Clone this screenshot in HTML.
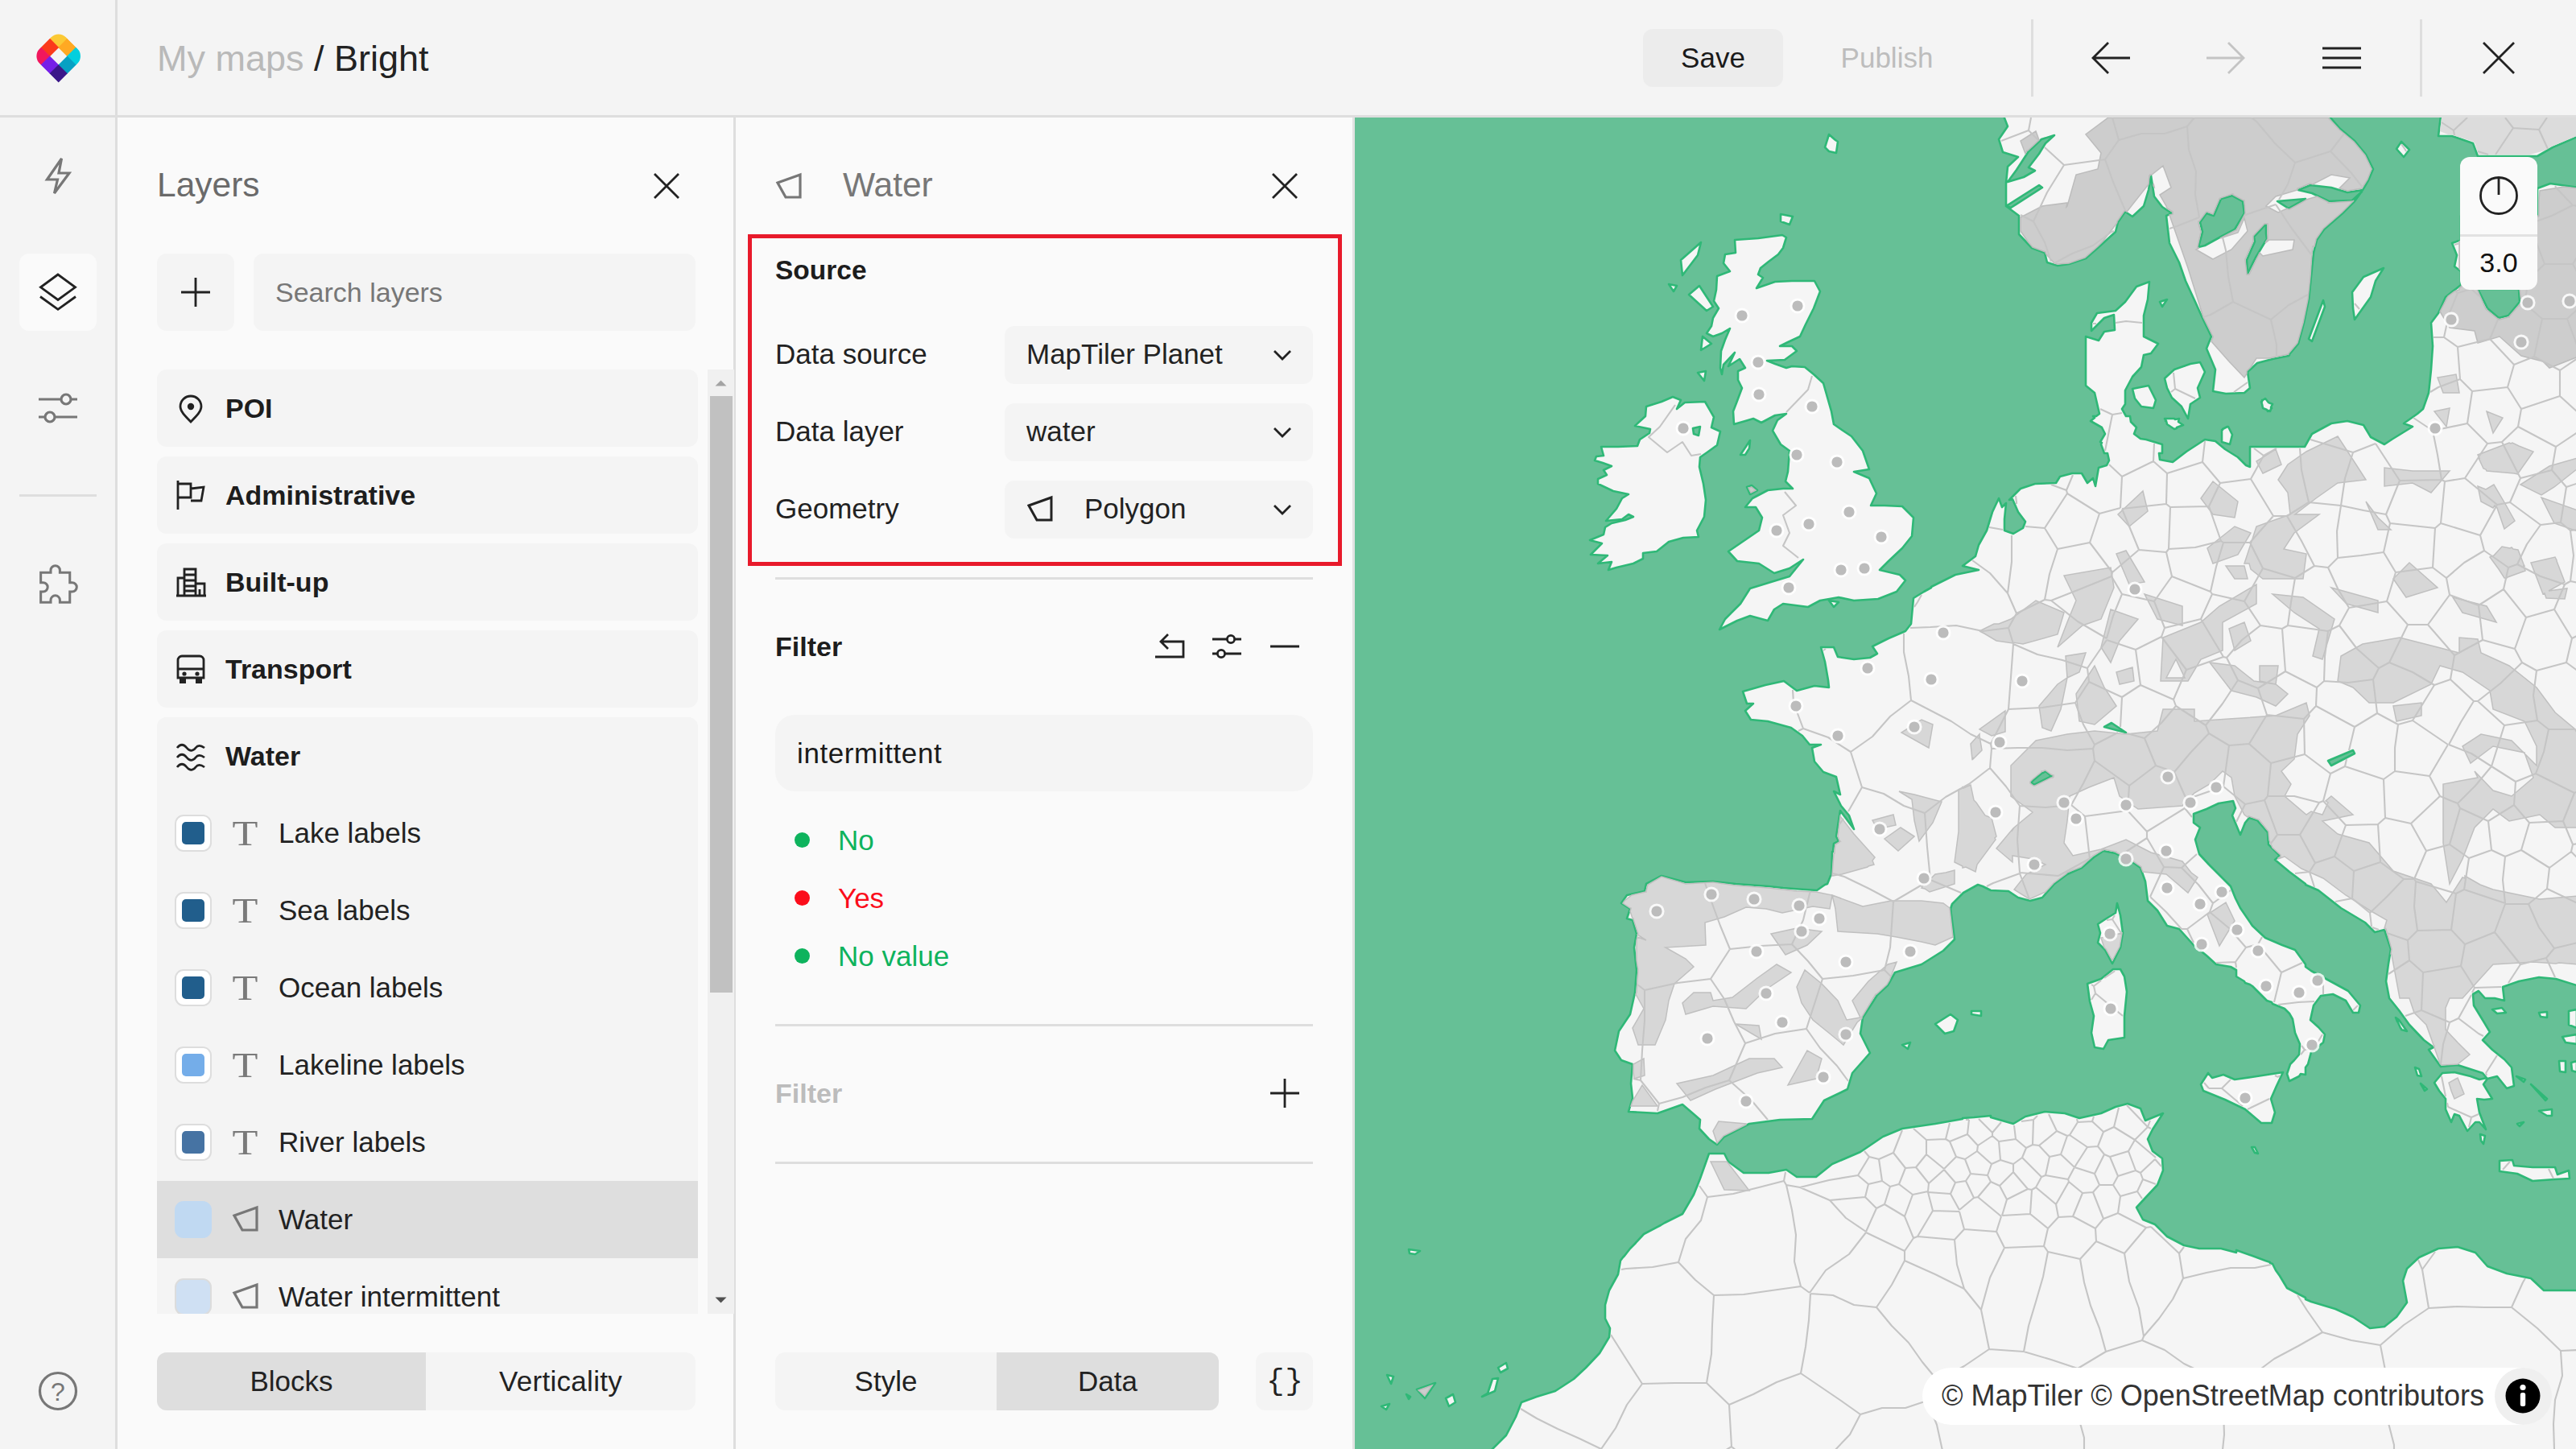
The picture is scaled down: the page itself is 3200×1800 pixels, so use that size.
<!DOCTYPE html>
<html lang="en">
<head>
<meta charset="utf-8">
<title>Bright - Map editor</title>
<style>
*{box-sizing:border-box;margin:0;padding:0}
html,body{width:3200px;height:1800px;overflow:hidden;background:#fafafa}
body{font-family:"Liberation Sans",sans-serif;font-size:35px;color:#222;position:relative}
.abs{position:absolute}
svg{display:block;position:absolute;overflow:visible}
.ico{fill:none;stroke:#222;stroke-width:2.8;stroke-linecap:butt;stroke-linejoin:miter}
.gico{fill:none;stroke:#777;stroke-width:3.2}
#header{left:0;top:0;width:3200px;height:146px;background:#f4f4f4;border-bottom:3px solid #dedede}
#side{left:0;top:0;width:146px;height:1800px;background:#f4f4f4;border-right:3px solid #dedede}
#layers{left:146px;top:146px;width:768px;height:1654px;background:#fafafa;border-right:3px solid #dedede}
#props{left:914px;top:146px;width:769px;height:1654px;background:#fafafa;border-right:3px solid #e2e2e2}
#map{left:1682px;top:146px;width:1518px;height:1654px;background:#66c096;overflow:hidden}
.t{position:absolute;white-space:nowrap;line-height:1}
.box{position:absolute;background:#f4f4f4;border-radius:12px}
.grp{position:absolute;left:195px;width:672px;height:96px;background:#f4f4f4;border-radius:12px}
.grp .t{left:85px;top:31px;font-weight:bold;font-size:34px;color:#1d1d1d}
.row{position:absolute;left:195px;width:672px;height:96px}
.row .t{left:151px;top:30px;font-size:35px}
.sw{position:absolute;left:22px;top:25px;width:46px;height:46px;border-radius:11px;background:#fff;border:2px solid #ddd}
.sw i{position:absolute;left:7px;top:7px;width:28px;height:28px;border-radius:5px}
.hr{position:absolute;left:963px;width:668px;height:3px;background:#dedede}
.lbl{left:963px;font-size:35px}
.sel{left:1248px;width:383px;height:72px}
.dot{position:absolute;width:19px;height:19px;border-radius:50%}
</style>
</head>
<body>
<!-- MAP -->
<div id="map" class="abs">
<svg id="mapsvg" width="1518" height="1654" viewBox="1682 146 1518 1654" style="left:0;top:0">
<!--MAPCONTENT-->
<path d="M2281,190 2283,176 2280,174 2272,167 2267,183 2272,188ZM2212,266 2212,275 2223,279 2227,269ZM2088,323 2090,342 2109,317 2113,301ZM2083,355 2073,353 2079,362ZM2098,366 2120,386 2128,381 2111,355ZM2126,427 2115,418 2113,435ZM2119,461 2109,463 2117,473ZM2196,609 2177,619 2168,630 2181,630 2189,643 2185,659 2166,672 2147,685 2158,697 2185,700 2204,712 2223,706 2240,695 2223,716 2200,723 2174,731 2162,750 2143,769 2136,782 2158,771 2174,765 2196,771 2204,757 2215,750 2246,754 2261,746 2284,742 2303,746 2333,744 2356,735 2367,721 2360,714 2335,708 2346,697 2363,681 2375,666 2377,643 2363,629 2341,628 2324,628 2331,613 2322,594 2303,586 2322,583 2314,560 2300,542 2288,534 2278,527 2275,511 2269,490 2265,476 2253,465 2242,456 2226,455 2219,457 2205,452 2195,448 2217,447 2232,436 2226,430 2211,430 2221,425 2236,418 2243,403 2253,383 2261,362 2254,349 2226,349 2205,350 2182,358 2190,345 2184,341 2187,333 2197,325 2209,316 2215,308 2219,295 2214,292 2184,296 2155,298 2156,314 2143,316 2141,327 2149,337 2133,343 2132,360 2129,374 2135,383 2128,395 2126,405 2120,414 2128,418 2139,414 2149,408 2143,422 2138,436 2137,457 2139,465 2141,453 2155,438 2147,455 2161,446 2168,457 2159,461 2159,472 2164,482 2158,498 2153,511 2154,527 2168,523 2178,520 2188,525 2205,516 2219,514 2208,522 2202,535 2212,552 2223,560 2221,586 2218,598 2227,607 2215,607ZM2168,565 2173,557 2174,547 2162,565ZM1989,555 1992,566 1983,567 1981,572 1991,575 2002,579 1992,584 1996,590 1985,595 1985,601 2004,610 2023,614 2015,619 2008,632 1995,647 2015,645 2023,639 2029,642 2019,646 2002,650 1994,655 1992,664 1975,671 1990,675 1976,689 1997,690 1985,700 2002,698 1998,708 2008,705 2029,700 2041,694 2041,687 2058,685 2073,673 2091,668 2110,667 2108,659 2117,642 2119,621 2116,601 2111,580 2112,568 2122,561 2133,553 2137,536 2126,531 2129,518 2118,499 2093,500 2083,508 2088,497 2078,493 2064,499 2045,505 2044,517 2031,529 2050,533 2049,538 2037,546 2034,554 2010,555ZM2110,541 2104,539 2103,532 2112,530ZM2170,605 2174,614 2183,609 2176,603ZM2284,748 2272,746 2278,754ZM2346,793 2326,803 2332,812 2323,817 2303,819 2283,816 2278,804 2262,804 2267,822 2271,845 2272,854 2254,852 2232,858 2216,846 2193,851 2165,859 2170,874 2178,874 2168,883 2175,894 2196,896 2225,904 2239,914 2248,925 2262,925 2251,929 2254,946 2265,959 2281,965 2286,987 2278,983 2287,1001 2297,1013 2303,1030 2286,1007 2281,1039 2284,1045 2278,1048 2277,1058 2276,1058 2275,1087 2274,1088 2270,1098 2267,1099 2257,1106 2228,1104 2215,1103 2197,1101 2156,1098 2128,1095 2094,1096 2064,1088 2045,1098 2043,1107 2021,1112 2014,1122 2025,1129 2021,1141 2028,1143 2033,1160 2030,1177 2033,1205 2031,1233 2025,1260 2011,1281 2006,1305 2014,1317 2028,1322 2026,1346 2028,1364 2023,1381 2059,1383 2090,1372 2104,1384 2112,1391 2111,1402 2123,1415 2133,1422 2142,1412 2173,1396 2211,1391 2251,1390 2266,1367 2287,1357 2295,1353 2301,1333 2323,1308 2311,1284 2314,1264 2332,1236 2345,1224 2354,1208 2387,1198 2414,1181 2428,1167 2423,1129 2425,1123 2439,1109 2457,1099 2463,1101 2473,1106 2495,1107 2507,1115 2522,1119 2537,1115 2552,1098 2568,1086 2586,1078 2601,1065 2613,1057 2628,1060 2646,1069 2659,1078 2665,1095 2668,1119 2680,1131 2692,1150 2707,1154 2725,1174 2741,1187 2753,1198 2771,1201 2778,1205 2778,1213 2788,1219 2789,1221 2795,1223 2798,1225 2816,1243 2822,1245 2823,1247 2838,1253 2844,1259 2848,1266 2851,1283 2857,1297 2856,1310 2850,1317 2847,1320 2847,1320 2845,1322 2841,1334 2844,1343 2856,1337 2858,1334 2864,1335 2864,1326 2867,1322 2871,1307 2886,1295 2888,1285 2880,1276 2870,1267 2874,1249 2883,1237 2898,1235 2914,1243 2923,1258 2930,1258 2932,1249 2917,1231 2895,1219 2871,1206 2864,1201 2864,1198 2851,1180 2835,1174 2814,1165 2798,1150 2783,1128 2777,1116 2771,1101 2756,1086 2744,1074 2732,1061 2727,1043 2733,1028 2725,1022 2725,1011 2741,1005 2756,998 2774,995 2777,1004 2773,1013 2783,1037 2789,1022 2794,1016 2804,1019 2817,1034 2818,1049 2832,1063 2826,1068 2844,1083 2864,1098 2864,1099 2880,1106 2908,1128 2938,1146 2950,1158 2962,1155 2970,1179 2967,1197 2964,1219 2968,1240 2980,1255 2993,1273 3011,1292 3023,1301 3017,1304 3032,1325 3053,1323 3084,1333 3089,1339 3080,1341 3069,1337 3049,1332 3034,1333 3024,1345 3030,1355 3038,1365 3038,1378 3045,1394 3049,1384 3055,1386 3065,1405 3075,1394 3080,1394 3088,1403 3080,1382 3077,1365 3086,1366 3096,1365 3085,1347 3090,1340 3090,1340 3102,1337 3114,1352 3123,1349 3120,1326 3111,1316 3096,1304 3084,1292 3093,1282 3084,1267 3073,1249 3072,1235 3079,1231 3087,1240 3099,1240 3111,1243 3109,1226 3129,1219 3154,1214 3175,1216 3204,1225 3204,1005 3205,1005 3205,555 3204,555 3204,233 3168,228 3152,234 3152,268 3057,268 3057,298 3046,302 3052,317 3049,331 3057,337 3057,354 3038,369 3029,389 3020,401 3022,430 3020,459 3017,488 3010,508 3003,514 2986,526 2997,530 2971,546 2962,552 2945,543 2936,528 2916,523 2896,526 2872,539 2863,555 2795,555 2795,580 2790,578 2780,568 2764,558 2752,548 2739,546 2716,561 2699,574 2683,571 2682,563 2686,563 2686,552 2666,546 2659,545 2651,539 2654,531 2647,524 2646,517 2641,517 2636,508 2640,502 2640,485 2649,468 2660,456 2663,441 2672,439 2681,427 2663,418 2663,392 2668,372 2670,350 2654,356 2640,375 2628,386 2605,389 2598,401 2598,411 2614,395 2626,391 2627,410 2614,412 2607,423 2591,418 2591,479 2602,488 2608,514 2604,517 2600,517 2602,519 2597,523 2611,531 2615,539 2609,549 2611,550 2610,552 2614,563 2618,563 2620,572 2617,578 2607,581 2603,604 2600,594 2593,600 2586,588 2574,588 2559,592 2554,600 2528,601 2510,607 2497,620 2496,621 2500,620 2507,636 2516,648 2513,656 2501,663 2490,659 2490,645 2492,625 2487,630 2483,619 2475,636 2468,659 2458,677 2454,691 2438,703 2458,708 2429,714 2399,729 2399,730 2390,735 2377,743 2374,775 2367,784ZM2641,910 2629,907 2614,903 2623,898ZM2538,960 2541,958 2548,964 2549,964 2547,965 2527,975 2523,972 2526,969 2537,960ZM3104,395 3090,383 3078,359 3129,359 3130,375 3116,392ZM2925,936 2896,951 2892,945 2923,932ZM2311,1431 2276,1446 2256,1462 2232,1462 2219,1453 2197,1457 2166,1457 2147,1443 2142,1433 2123,1433 2112,1464 2104,1484 2090,1508 2068,1519 2063,1522 2042,1533 2031,1545 2025,1551 2018,1560 2016,1562 2016,1562 2013,1566 2010,1583 1999,1603 1994,1621 1994,1638 2000,1650 1999,1661 1987,1681 1970,1699 1955,1713 1932,1728 1909,1735 1890,1742 1883,1760 1871,1783 1854,1800 1851,1803 2095,1803 2095,1805 2445,1805 2445,1803 2778,1803 2864,1803 3204,1803 3204,1603 3160,1603 3144,1588 3114,1582 3090,1573 3075,1556 3053,1549 3029,1551 3005,1562 2990,1576 2985,1591 2990,1618 2977,1636 2962,1648 2944,1650 2923,1636 2901,1626 2871,1617 2864,1614 2864,1612 2841,1600 2832,1585 2827,1578 2823,1570 2820,1569 2820,1568 2814,1566 2798,1560 2778,1553 2778,1556 2759,1551 2732,1551 2713,1547 2692,1536 2677,1521 2662,1515 2654,1500 2665,1488 2680,1472 2687,1454 2686,1439 2674,1430 2668,1415 2674,1403 2687,1383 2665,1392 2659,1377 2643,1371 2628,1375 2610,1383 2583,1389 2565,1383 2540,1381 2516,1387 2501,1396 2473,1388 2473,1386 2452,1388 2438,1389 2438,1390 2404,1396 2363,1402 2339,1412ZM1750,1552 1751,1557 1758,1558 1764,1554ZM1861,1699 1864,1705 1873,1700 1871,1693ZM1731,1710 1723,1708 1728,1719ZM1861,1712 1854,1713 1848,1731 1841,1735 1857,1728ZM1783,1718 1760,1726 1770,1737ZM1752,1735 1747,1732 1750,1738ZM1796,1737 1800,1747 1808,1742 1805,1732ZM1726,1744 1716,1747 1722,1751ZM2492,256 2508,268 2508,291 2524,308 2540,314 2543,326 2556,330 2570,328 2591,321 2607,307 2628,288 2631,276 2640,263 2649,269 2663,256 2669,236 2672,218 2676,244 2686,257 2698,265 2691,268 2695,302 2707,326 2715,349 2727,375 2736,395 2747,418 2741,433 2752,459 2749,486 2765,489 2788,488 2795,482 2792,462 2804,451 2823,446 2843,442 2844,441 2844,440 2855,427 2862,401 2868,372 2871,343 2874,314 2878,298 2887,285 2910,265 2925,250 2933,239 2934,238 2922,249 2893,250 2872,240 2855,236 2870,230 2896,233 2916,239 2935,236 2942,224 2948,210 2939,192 2925,175 2907,160 2893,144 2844,144 2797,144 2489,144 2494,157 2483,173 2488,189 2507,195 2494,207 2492,227ZM2533,230 2537,233 2498,258 2492,256ZM2536,173 2552,168 2541,178 2533,191 2520,208 2528,212 2514,220 2494,226 2505,211 2520,188ZM2731,307 2736,288 2733,276 2741,265 2750,268 2759,247 2773,243 2786,250 2788,265 2776,285 2759,294 2739,305ZM2864,247 2843,259 2829,250ZM2816,297 2814,300 2802,320 2792,340 2791,323 2801,300 2800,294 2814,279 2815,280 2815,279 2815,290ZM2692,372 2683,375 2686,381ZM2868,421 2872,424 2888,381 2886,373ZM2733,450 2721,452 2701,459 2689,470 2692,482 2698,494 2710,505 2718,520 2721,502 2733,494 2730,482 2739,462ZM2675,507 2678,497 2669,479 2649,483 2652,495 2660,505ZM2821,508 2822,507 2821,506 2823,502 2818,500 2814,495 2811,497 2810,497 2810,499 2809,499 2810,502 2811,507 2816,509 2817,511 2818,510 2820,511ZM2712,528 2706,524 2707,520 2702,521 2701,520 2689,520 2691,523 2690,523 2691,523 2692,527 2701,533 2704,532 2704,532 2704,531ZM2761,534 2760,534 2760,549 2770,552 2773,540 2768,530 2767,530 2767,530 2761,533ZM2634,1177 2637,1159 2634,1137 2630,1122 2628,1134 2615,1142 2606,1148 2609,1159 2606,1171 2615,1180 2624,1197ZM2619,1292 2639,1289 2639,1262 2642,1232 2639,1213 2634,1204 2625,1204 2610,1216 2593,1222 2596,1244 2601,1262 2598,1283 2602,1301 2613,1303ZM2449,1260 2461,1262 2461,1256 2449,1256ZM2423,1260 2404,1272 2416,1284 2427,1281 2432,1267ZM2373,1295 2363,1298 2370,1303ZM2828,1349 2836,1332 2797,1338 2776,1341 2762,1335 2748,1339 2743,1333 2734,1347 2737,1355 2764,1366 2789,1378 2809,1395 2822,1395 2826,1382 2821,1365ZM2797,1425 2801,1432 2805,1433 2801,1425ZM3032,144 3029,169 3046,169 3072,178 3078,194 3152,194 3171,183 3204,169 3204,144ZM2977,185 2986,195 2993,186 2983,176ZM2923,383 2925,397 2945,369 2951,349 2961,333 2936,344 2922,363ZM3096,1254 3102,1259 3113,1258 3108,1252ZM3154,1258 3156,1263 3164,1264 3164,1257ZM3191,1256 3191,1273 3201,1277 3201,1254ZM2983,1278 2983,1279 2990,1281 2980,1267 2976,1264 2978,1269 2977,1266 2982,1277ZM3183,1288 3187,1295 3201,1297 3201,1285ZM3195,1330 3201,1332 3201,1318 3194,1320ZM3180,1331 3187,1332 3187,1318 3179,1318ZM3000,1326 3003,1336 3008,1337 3005,1328ZM3137,1341 3126,1337 3135,1344ZM3015,1353 3007,1346 3012,1355ZM3144,1347 3162,1367 3164,1365ZM3154,1380 3164,1386 3170,1386 3170,1378ZM3135,1394 3127,1396 3130,1399ZM3081,1409 3082,1417 3085,1421 3087,1411ZM3146,1450 3123,1448 3121,1441 3105,1442 3105,1455 3127,1458 3146,1467 3174,1465 3192,1464 3191,1454 3177,1459 3174,1450Z" fill="#f5f5f5" fill-rule="evenodd" stroke="#2fb877" stroke-width="2.6" stroke-linejoin="round"/>
<path d="M2480,796 2500,799 2500,798 2513,800 2556,788 2564,761 2529,746 2498,769 2483,775 2477,775 2459,784 2460,784 2459,784 2465,787ZM2474,914 2491,909 2491,883 2459,906ZM2396,929 2401,900 2387,894 2362,910ZM2448,924 2450,943 2451,942 2451,943 2462,932 2459,914 2459,915 2459,912ZM2378,1019 2384,1045 2401,1022 2412,996 2378,987 2359,983 2375,993ZM2332,1030 2355,1025 2352,1012 2326,1019ZM2454,1083 2456,1074 2479,1043 2478,1041 2480,1039 2474,1016 2466,1013 2455,997 2452,994 2448,975 2439,979 2438,978 2438,979 2433,981 2433,1033 2428,1071 2438,1076 2438,1078 2442,1077ZM2378,1039 2361,1028 2341,1042 2358,1057ZM2320,1077 2321,1076 2328,1074 2326,1069 2329,1065 2303,1036 2286,1014 2283,1039 2285,1044 2285,1044 2286,1045 2286,1045 2286,1045 2286,1045 2286,1045 2286,1045 2285,1045 2285,1046 2285,1046 2285,1046 2285,1046 2285,1046 2285,1046 2285,1046 2285,1046 2280,1049 2279,1057 2279,1058 2279,1059 2279,1059 2279,1059 2279,1059 2279,1060 2278,1060 2276,1087 2276,1088 2276,1088 2276,1088 2276,1088 2288,1086ZM2387,1101 2388,1102 2387,1103 2391,1104 2397,1108 2428,1098 2428,1081 2417,1084 2404,1086 2395,1095ZM2252,1126 2273,1129 2276,1112 2256,1108 2232,1107 2197,1103 2156,1100 2128,1096 2094,1098 2064,1089 2064,1089 2047,1099 2045,1107 2045,1107 2045,1107 2045,1107 2045,1107 2045,1108 2045,1108 2044,1108 2044,1108 2044,1108 2044,1108 2044,1108 2044,1108 2027,1112 2018,1119 2016,1122 2025,1128 2025,1128 2026,1128 2026,1128 2026,1128 2026,1128 2026,1128 2026,1129 2026,1129 2026,1129 2026,1129 2026,1129 2026,1129 2026,1129 2025,1132 2028,1141 2028,1141 2028,1141 2029,1141 2029,1142 2029,1142 2029,1142 2029,1142 2029,1142 2029,1142 2029,1142 2029,1142 2029,1142 2035,1160 2035,1160 2035,1160 2035,1160 2035,1160 2035,1160 2034,1161 2045,1168 2034,1164 2033,1168 2033,1193 2035,1205 2035,1205 2035,1205 2033,1233 2033,1233 2033,1233 2032,1235 2042,1253 2028,1277 2035,1298 2056,1298 2069,1267 2073,1243 2080,1222 2104,1201 2094,1191 2069,1177 2119,1174 2118,1146 2142,1139 2169,1127 2194,1129 2214,1134ZM2387,1119 2349,1119 2314,1126 2276,1112 2280,1129 2283,1157 2332,1160 2356,1164 2387,1170 2404,1174 2426,1164 2422,1129 2422,1129 2422,1129 2422,1129 2422,1129 2422,1128 2414,1122ZM2232,1153 2200,1160 2218,1186 2245,1174 2263,1157ZM2128,1243 2125,1233 2104,1233 2090,1246 2094,1260 2128,1250 2169,1253 2194,1229 2225,1208 2207,1198 2183,1215 2152,1239ZM2345,1198 2321,1219 2301,1243 2311,1264 2294,1267 2283,1243 2263,1222 2242,1205 2232,1226 2238,1246 2252,1267 2273,1284 2290,1298 2307,1270 2313,1265 2313,1263 2313,1263 2313,1263 2313,1263 2313,1263 2330,1235 2330,1235 2331,1235 2331,1235 2344,1223 2347,1218 2356,1195ZM2156,1272 2188,1291 2185,1274ZM2256,1340 2263,1315 2245,1305 2221,1348ZM2029,1322 2029,1322 2029,1322 2029,1322 2029,1322 2029,1322 2029,1331 2030,1340 2043,1336 2042,1315 2029,1322ZM2131,1353 2183,1333 2214,1326 2204,1315 2173,1315 2128,1336 2083,1346 2100,1367ZM2026,1374 2059,1374 2040,1348 2028,1368ZM2135,1393 2128,1405 2133,1420 2141,1411 2141,1411 2141,1411 2141,1411 2141,1411 2169,1397 2169,1396ZM2142,1478 2173,1479 2146,1444 2146,1444 2146,1444 2146,1444 2146,1444 2146,1444 2146,1444 2145,1443 2145,1443 2125,1443ZM2811,588 2834,577 2827,558 2803,573ZM2734,619 2749,639 2776,643 2780,623 2749,598ZM2668,635 2662,610 2631,639 2645,654ZM2881,639 2851,639 2877,619 2904,600 2939,596 2919,565 2904,542 2865,561 2842,577 2830,596 2842,612 2845,639 2803,654 2792,688 2792,688 2792,688 2788,700 2794,700 2796,707 2811,719 2861,719 2865,688 2837,682 2850,662ZM2776,654 2742,681 2749,700 2780,689 2796,662ZM2664,723 2641,684 2629,688 2645,726ZM2792,719 2788,703 2765,703 2776,719ZM2579,746 2568,773 2556,804 2587,777 2610,769 2626,730 2622,705 2564,715ZM2680,769 2711,777 2711,753 2664,738ZM2873,815 2885,819 2900,769 2861,742 2823,738 2850,761 2881,781ZM2687,792 2684,846 2718,846 2734,819 2761,808 2761,773 2803,750 2803,726 2757,753 2734,773ZM2691,842 2703,819 2714,842ZM2622,757 2610,804 2622,823 2633,796 2656,769ZM2776,808 2796,796 2788,773 2769,781ZM2568,842 2583,835 2591,811 2566,815ZM2827,850 2830,827 2807,827 2807,846ZM2651,846 2649,829 2629,835 2633,850ZM2772,858 2803,866 2827,877 2842,862 2827,850 2800,846 2776,827 2745,823ZM2629,877 2614,854 2602,827 2579,862 2583,896 2602,900ZM2560,881 2568,842 2556,850 2533,877 2537,904 2548,908ZM2776,989 2788,1012 2792,1015 2793,1015 2793,1015 2793,1015 2793,1015 2793,1015 2793,1015 2793,1014 2793,1014 2794,1014 2794,1014 2794,1014 2794,1014 2794,1014 2805,1018 2805,1018 2805,1018 2805,1018 2805,1018 2805,1018 2806,1018 2818,1033 2818,1033 2818,1033 2818,1034 2818,1034 2818,1034 2818,1034 2819,1044 2823,1053 2833,1062 2833,1062 2833,1062 2833,1062 2833,1062 2833,1063 2833,1063 2833,1063 2833,1063 2833,1063 2833,1063 2833,1063 2833,1064 2833,1064 2833,1064 2833,1064 2833,1064 2833,1064 2830,1066 2830,1067 2838,1064 2859,1079 2886,1091 2914,1112 2944,1131 2965,1143 2962,1153 2962,1153 2962,1153 2962,1153 2962,1153 2963,1153 2963,1153 2963,1154 2963,1154 2963,1154 2963,1154 2963,1154 2963,1154 2964,1154 2964,1154 2964,1154 2971,1179 2971,1179 2971,1179 2971,1179 2971,1179 2971,1179 2970,1185 2971,1186 2981,1240 2993,1240 2999,1258 3014,1273 3023,1298 3023,1299 3024,1299 3024,1300 3024,1300 3024,1300 3024,1300 3024,1300 3024,1300 3024,1300 3024,1300 3024,1301 3024,1301 3024,1301 3024,1301 3024,1301 3024,1301 3024,1301 3031,1321 3033,1323 3053,1322 3068,1310 3053,1295 3038,1279 3038,1252 3043,1240 3059,1240 3097,1198 3147,1195 3175,1197 3179,1196 3202,1198 3202,1113 3155,1117 3097,1105 3081,1099 3062,1088 3062,1091 3059,1090 3039,1121 3020,1098 2973,1082 2943,1047 2904,1036 2885,1020 2923,1012 2896,989 2889,995 2892,997 2885,1012 2871,1008 2865,1012 2838,989 2846,974 2834,958 2850,943 2854,912 2869,889 2865,873 2827,889 2769,893 2726,896 2726,881 2687,881 2680,908 2641,912 2602,908 2568,912 2529,920 2498,951 2498,989 2525,1009 2502,1028 2500,1031 2500,1030 2480,1054 2500,1071 2500,1063 2525,1067 2541,1074 2517,1086 2502,1105 2521,1117 2541,1108 2551,1097 2551,1097 2551,1097 2567,1085 2567,1085 2567,1084 2567,1084 2585,1077 2600,1063 2600,1063 2600,1063 2612,1056 2612,1056 2613,1056 2613,1055 2613,1055 2613,1055 2613,1055 2613,1055 2613,1055 2629,1058 2629,1059 2629,1059 2629,1059 2647,1068 2647,1068 2647,1068 2660,1077 2660,1077 2660,1077 2660,1077 2660,1077 2660,1078 2660,1078 2662,1083 2691,1086 2718,1109 2730,1090 2722,1084 2711,1070 2672,1059 2641,1043 2610,1055 2575,1063 2564,1047 2568,1020 2571,989 2595,978 2626,966 2633,989 2656,1005 2711,1001 2726,985 2745,974 2761,958 2772,966ZM2540,957 2540,957 2540,957 2540,957 2540,957 2540,957 2541,957 2541,957 2541,957 2541,957 2541,957 2541,957 2541,957 2548,962 2550,963 2550,963 2550,963 2550,963 2550,963 2550,963 2551,963 2551,964 2551,964 2551,964 2551,964 2551,964 2551,964 2551,964 2551,965 2551,965 2551,965 2551,965 2551,965 2551,965 2550,965 2550,965 2550,965 2550,966 2550,966 2550,966 2550,966 2550,966 2548,966 2528,976 2528,976 2527,976 2527,976 2527,976 2527,976 2527,976 2527,976 2527,976 2526,976 2526,976 2526,976 2522,973 2522,973 2522,973 2522,973 2522,973 2522,973 2522,972 2522,972 2522,972 2522,972 2522,972 2522,972 2522,972 2522,971 2522,971 2522,971 2522,971 2522,971 2522,971 2522,971 2525,968 2536,959 2536,959 2536,958 2537,958 2537,958 2537,958 2537,958 2537,958 2537,958 2537,958 2538,958 2538,958 2538,958 2540,957ZM2757,1175 2776,1144 2765,1121 2742,1136ZM2614,1177 2616,1179 2616,1179 2616,1179 2616,1179 2624,1193 2633,1176 2636,1159 2610,1165ZM3055,488 3051,465 3028,469 3035,488ZM3024,511 3039,530 3043,507ZM3089,511 3097,538 3109,519ZM3128,589 3128,588 3128,588 3147,561 3129,554 3121,550 3119,551 3117,550 3078,565 3080,569 3079,569 3085,582 3088,583 3089,585 3123,588ZM3202,569 3167,579 3131,602 3157,615 3173,605 3202,582ZM3020,612 3043,585 2997,585 2962,581 2962,604 2997,600ZM3098,602 3088,608 3078,604 3082,623 3097,631 3099,628 3102,631 3111,657 3124,647 3111,624ZM3202,660 3202,634 3157,618 3173,650ZM2954,658 2970,658 2954,643 2939,623ZM3128,683 3122,682 3120,680 3118,681 3108,679 3098,690 3093,692 3104,707 3111,718 3112,718 3113,719 3115,717 3137,709 3135,703 3136,703 3135,701ZM3166,734 3186,723 3176,697 3176,696 3176,696 3174,692 3144,699 3159,738 3161,737 3163,743 3186,744 3189,731ZM2989,742 3028,730 2993,699 2973,719ZM2915,750 2954,761 2954,746 2896,730ZM3101,773 3089,753 3047,742 3059,761ZM3008,889 3008,873 2973,877 2977,896ZM3082,811 3078,794 3055,792 3055,811 3028,804 2981,792 2935,800 2908,815 2904,846 2923,854 2943,873 2973,873 3020,850 3031,827 3059,835 3093,858 3097,881 3136,896 3151,927 3151,951 3120,920 3082,912 3059,927 3069,948 3097,927 3136,935 3147,966 3120,989 3097,982 3074,958 3078,966 3035,974 3035,1047 3043,1098 3059,1067 3074,1028 3097,1005 3117,1020 3155,1012 3174,1028 3202,1028 3202,1005 3202,1005 3202,1005 3202,1005 3202,1004 3202,1004 3202,1004 3202,1004 3203,1004 3203,1004 3203,1004 3203,1004 3203,1004 3203,1004 3203,1004 3203,1004 3204,1004 3204,910 3174,885 3151,854 3117,827ZM3042,1345 3045,1355 3049,1365 3061,1359 3053,1339Z" fill="#d7d7d7" fill-rule="evenodd" stroke="#c0c0c0" stroke-width="1.5"/>
<path d="M3170,182 3170,182 3203,168 3203,146 3033,146 3031,162 3031,163 3041,167 3046,167 3047,167 3047,168 3047,168 3073,176 3073,176 3073,176 3073,176 3073,177 3074,177 3074,177 3074,177 3074,177 3074,177 3079,192 3143,192 3161,187Z" fill="#dcdcdc" fill-rule="evenodd"/>
<path d="M2510,175 2516,191 2518,187 2519,187 2519,187 2519,187 2533,174 2529,163ZM2519,300 2525,307 2541,313 2541,313 2541,313 2541,313 2541,313 2541,313 2541,313 2541,313 2541,313 2541,313 2541,314 2542,316 2543,317 2552,327 2556,328 2570,327 2590,320 2606,306 2606,306 2612,300 2629,278 2630,276 2630,276 2630,276 2630,275 2639,262 2639,262 2639,262 2639,262 2639,262 2639,262 2639,262 2640,262 2640,262 2640,262 2640,262 2640,262 2640,262 2640,262 2641,262 2641,262 2641,262 2642,263 2669,229 2670,218 2670,218 2670,218 2671,218 2671,217 2671,217 2671,217 2671,217 2671,217 2671,217 2671,217 2671,217 2672,217 2672,217 2672,217 2672,217 2672,217 2672,217 2672,217 2673,217 2687,206 2697,233 2683,242 2691,256 2692,259 2699,263 2699,263 2699,264 2699,264 2699,264 2699,264 2699,264 2699,264 2699,264 2699,264 2699,265 2699,265 2699,265 2699,265 2699,265 2699,265 2699,265 2699,266 2699,266 2699,266 2699,266 2699,266 2699,266 2695,267 2718,333 2737,394 2737,394 2749,418 2749,418 2749,418 2749,418 2749,418 2749,418 2749,418 2749,419 2749,419 2749,419 2747,424 2769,449 2788,469 2791,464 2791,462 2791,462 2791,462 2791,462 2791,461 2791,461 2791,461 2791,461 2791,461 2791,461 2791,461 2796,456 2803,445 2819,445 2823,444 2823,444 2843,440 2843,440 2843,440 2843,440 2843,440 2843,440 2843,440 2843,439 2854,426 2861,401 2867,372 2870,343 2872,314 2873,306 2875,306 2877,298 2877,297 2877,297 2877,297 2886,284 2886,284 2886,284 2886,284 2909,264 2924,249 2924,249 2923,250 2923,250 2923,250 2922,250 2922,250 2922,250 2922,250 2922,250 2893,252 2893,252 2893,252 2892,252 2892,252 2892,251 2878,244 2865,248 2864,249 2844,260 2844,260 2844,260 2844,260 2844,260 2844,260 2843,260 2843,260 2843,260 2843,260 2843,260 2843,260 2841,259 2830,264 2815,256 2827,244 2854,236 2854,236 2854,236 2854,236 2854,236 2854,236 2854,235 2854,235 2854,235 2854,235 2854,235 2854,235 2854,235 2854,235 2854,234 2854,234 2854,234 2855,234 2869,228 2869,228 2869,228 2869,228 2870,228 2870,228 2873,229 2896,217 2919,221 2906,234 2916,237 2934,234 2941,223 2946,210 2938,193 2924,176 2906,161 2906,161 2892,146 2619,146 2591,167 2610,190 2606,210 2579,217 2568,256 2567,257 2568,252 2537,256 2510,270 2510,287ZM2749,322 2728,310 2732,308 2731,308 2731,308 2731,308 2731,308 2731,308 2731,308 2731,308 2730,308 2730,308 2730,308 2730,308 2730,307 2730,307 2730,307 2730,307 2730,307 2730,307 2730,307 2730,306 2730,306 2734,288 2731,277 2731,276 2731,276 2731,276 2731,276 2731,276 2731,276 2731,276 2731,275 2732,275 2740,264 2740,264 2740,264 2741,263 2741,263 2741,263 2741,263 2741,263 2741,263 2741,263 2741,263 2742,263 2742,263 2742,263 2749,266 2757,247 2758,247 2758,246 2758,246 2758,246 2758,246 2758,246 2758,246 2758,246 2758,246 2773,241 2773,241 2773,241 2773,241 2773,241 2774,241 2774,241 2774,242 2774,242 2787,249 2787,249 2787,249 2787,249 2788,249 2788,249 2788,249 2788,250 2788,250 2788,250 2788,250 2789,264 2789,265 2789,265 2789,265 2789,265 2789,265 2789,265 2778,286 2777,286 2777,286 2777,286 2777,286 2777,286 2777,286 2760,295 2758,296 2780,289 2788,271 2792,287 2772,310ZM2811,318 2807,314 2804,320 2794,341 2793,341 2793,341 2793,341 2793,341 2793,341 2793,341 2793,341 2793,341 2792,341 2792,341 2792,341 2792,341 2792,341 2792,341 2792,341 2791,341 2791,341 2791,341 2791,341 2791,341 2791,341 2791,341 2791,341 2791,340 2791,340 2791,340 2789,323 2789,323 2789,322 2789,322 2789,322 2789,322 2799,300 2799,294 2799,294 2799,294 2799,293 2799,293 2799,293 2799,293 2799,293 2799,293 2799,293 2813,278 2814,278 2814,278 2814,278 2814,278 2814,278 2814,278 2814,278 2815,278 2815,278 2815,278 2815,278 2815,278 2815,278 2815,278 2815,278 2816,278 2816,278 2816,278 2816,278 2816,278 2816,278 2816,278 2817,278 2817,278 2817,278 2817,279 2817,279 2817,279 2817,279 2817,279 2817,290 2817,296 2817,297 2817,297 2817,297 2817,297 2817,297 2817,297 2817,297 2815,300 2814,302 2819,298 2850,298 2848,310ZM2676,232 2675,228 2675,231ZM3043,407 3074,411 3078,426 3105,418 3132,442 3159,449 3167,457 3203,443 3203,234 3185,232 3155,237 3154,249 3154,268 3154,268 3154,268 3154,268 3154,268 3153,268 3153,268 3153,268 3153,269 3153,269 3153,269 3153,269 3153,269 3153,269 3152,269 3152,269 3152,269 3058,269 3058,298 3058,298 3058,298 3058,298 3058,299 3058,299 3058,299 3058,299 3058,299 3057,299 3057,299 3057,299 3057,299 3055,300 3055,334 3057,336 3058,336 3058,336 3058,336 3058,336 3058,337 3058,337 3058,337 3058,337 3058,337 3058,354 3058,355 3058,355 3058,355 3058,355 3058,355 3058,355 3058,355 3058,356 3057,356 3055,358 3055,360 3049,362 3041,368 3031,387ZM3105,397 3104,397 3104,397 3104,397 3104,397 3104,396 3104,396 3104,396 3103,396 3089,385 3089,385 3089,384 3089,384 3089,384 3088,384 3077,359 3077,359 3077,359 3077,359 3077,359 3077,359 3077,359 3077,358 3077,358 3077,358 3077,358 3077,358 3077,358 3077,358 3077,358 3078,358 3078,357 3078,357 3078,357 3078,357 3078,357 3129,357 3129,357 3129,357 3129,357 3130,357 3130,358 3130,358 3130,358 3130,358 3130,358 3130,358 3130,358 3130,358 3130,358 3130,359 3130,359 3132,375 3132,375 3132,375 3132,375 3132,375 3132,375 3132,375 3132,376 3132,376 3117,393 3117,393 3117,393 3117,393 3117,394 3116,394 3116,394 3105,397ZM2175,612 2181,609 2176,605 2172,606ZM1762,1727 1770,1734 1779,1721Z" fill="#cdcdcd" fill-rule="evenodd" stroke="#bcbcbc" stroke-width="1.5"/>
<path d="M2251,467 2246,484 2219,512M2217,611 2231,628 2215,640 2223,662 2215,678 2234,693M2081,503 2062,530 2048,543 2071,562 2090,549 2101,566 2113,564M2249,1107 2248,1110 2240,1143 2226,1173M2118,1097 2126,1120 2137,1150 2149,1179M2226,1173 2187,1175 2149,1179M2761,1801 2763,1782 2762,1752 2765,1723M2765,1723 2740,1707 2713,1694 2689,1677 2661,1665M2661,1665 2616,1679M2616,1679 2581,1700M2589,1801 2589,1786 2581,1757 2586,1728 2581,1700M3173,1801 3173,1800 3172,1769 3174,1739 3183,1709 3181,1678M3202,1677 3181,1678M2234,908 2240,905M2240,905 2228,873 2227,857M2313,978 2296,1008M2290,1017 2285,1024M2313,978 2299,934M2299,934 2271,916 2240,905M2034,1223 2043,1230M2149,1179 2125,1216M2043,1230 2084,1221 2125,1216M2029,1340 2038,1342M2043,1230 2043,1268 2040,1305 2038,1342M2038,1342 2061,1371M2061,1371 2059,1380M2968,823 2991,776M2968,823 2997,835 3024,851M3049,814 3044,844M3049,814 3016,776M3016,776 2991,776M3024,851 3044,844M2955,830 2968,823M2955,830 2928,806 2906,777M2906,777 2918,755M2918,755 2965,747M2965,747 2991,776M2765,1723 2797,1709 2825,1688 2855,1672 2885,1655M2974,1801 2974,1795 2966,1764 2962,1734 2963,1702 2957,1671M2885,1655 2921,1665 2957,1671M3181,1678 3152,1650 3120,1624M3120,1624 3086,1624 3052,1623 3017,1625M2957,1671 2986,1646 3017,1625M2313,978 2340,986 2365,1001 2391,1010M2277,1085 2291,1089 2322,1104 2352,1120M2352,1120 2398,1093M2398,1093 2394,1052 2391,1010M2125,1216 2142,1241 2154,1269 2168,1296M2061,1371 2090,1363 2119,1351 2148,1342M2148,1342 2168,1296M2299,934 2326,915 2348,890 2374,870M2374,870 2399,883 2424,896 2448,912 2473,924M2391,1010 2417,990 2446,974 2472,954M2472,954 2474,930M2474,930 2473,924M1989,1800 1962,1787 1935,1775 1909,1762 1889,1750M2040,1719 2020,1688 2001,1658M2040,1719 2021,1745 2007,1774 1989,1800M2394,1740 2367,1749 2338,1749 2311,1757M2394,1740 2406,1770 2413,1802 2413,1803M2311,1757 2298,1782 2278,1803M2141,1803 2151,1797M2151,1797 2158,1803M3103,397 3093,421M3129,380 3136,377M3136,377 3158,396M3148,443 3158,396M3148,443 3123,453M3123,453 3093,421M3023,419 3036,419M3019,487 3029,481 3056,471M3036,419 3053,431M3056,471 3053,431M2632,174 2660,166 2689,166 2717,157M2632,174 2624,146M2726,146 2717,157M3136,377 3141,347M3141,347 3161,328M3161,328 3196,328M3189,396 3158,396M3189,396 3202,384M3196,328 3202,339M2948,844 2955,830M2948,844 2917,848 2887,846M2906,777 2892,784M2887,846 2888,815 2892,784M2875,703 2892,705M2875,703 2851,718M2892,705 2904,731 2918,755M2851,718 2846,748 2842,777M2892,784 2842,777M2875,703 2859,672 2841,641M2795,674 2811,706M2795,674 2824,641M2851,718 2811,706M2841,641 2824,641M2634,631 2636,592M2636,632 2691,626M2675,573 2636,592M2675,573 2692,588M2692,588 2691,626M2548,325 2540,301 2526,275M2552,327 2574,315 2600,305 2623,288 2626,287M2526,275 2543,239 2564,205M2640,261 2636,252 2625,226 2615,198M2615,198 2564,205M2486,175 2520,162M2520,162 2532,174M2540,183 2541,184 2564,205M2510,267 2526,275M2695,284 2704,281 2732,270M2732,270 2727,242 2728,213 2719,186 2717,157M2632,174 2615,198M2520,162 2523,146M3202,1048 3196,1049M3198,985 3184,1020M3198,985 3203,983M3184,1020 3196,1049M2661,1665 2663,1660M2663,1660 2682,1638 2699,1614 2712,1588M2885,1655 2866,1628 2854,1609M2821,1571 2801,1575 2771,1575 2741,1581 2712,1588M2663,1660 2657,1625 2645,1592 2639,1557M2672,1524 2707,1557M2672,1524 2666,1525M2639,1557 2666,1525M2712,1588 2707,1557M2398,1093 2436,1109M2509,1084 2506,1043 2509,1001M2472,954 2492,977 2509,1001M2509,1085 2476,1097 2468,1101M2671,1392 2668,1400M2668,1400 2642,1373M2668,1400 2672,1402M2738,1345 2744,1352M2265,808 2268,806M2374,870 2371,840 2365,810 2365,787M2600,402 2604,402M2628,401 2641,399 2661,401M2624,515 2636,513M2624,515 2609,508M2700,463 2702,483M2702,483 2697,487M2675,573 2676,551M2615,560 2624,515M2620,577 2636,592M2761,295 2765,311 2768,343 2774,375M2774,375 2746,391 2737,394M2501,800 2498,841 2495,881M2501,800 2531,813 2562,820 2593,830M2495,881 2537,879 2578,873M2578,873 2595,847M2593,830 2595,847M2473,924 2495,881M2495,780 2463,784 2430,777 2398,779 2373,780M2495,780 2501,800M2407,1715 2394,1740M2407,1715 2388,1692 2371,1668 2350,1647 2331,1624M2311,1757 2287,1740 2262,1723 2237,1706M2331,1624 2303,1621 2277,1609 2249,1607M2249,1607 2247,1640 2243,1673 2237,1706M2151,1797 2148,1745M2237,1706 2207,1717 2178,1732 2148,1745M2040,1719 2080,1718 2120,1718M2148,1745 2120,1718M3123,453 3115,481M3056,471 3071,486M3093,421 3053,431M3115,481 3071,486M3198,985 3150,961M3150,961 3160,934 3166,906M3166,906 3199,906M3203,913 3199,906M3203,897 3201,903M3152,895 3147,864 3151,833M3152,895 3111,901M3111,901 3078,871M3078,871 3106,849 3133,823M3133,823 3151,833M3188,823 3203,834M3188,823 3151,833M3166,906 3152,895M3150,961 3125,971M3125,971 3095,952M3095,952 3111,901M3073,871 3078,871M3073,871 3057,897 3042,925M3042,925 3070,936 3095,952M3049,814 3084,795M3044,844 3073,871M3084,795 3124,806M3124,806 3133,823M3016,776 3043,739M3084,795 3079,752M3079,752 3043,739M2965,747 2976,711M2976,711 3022,705M3022,705 3039,718M3043,739 3039,718M3188,823 3195,793M3195,793 3203,789M3080,368 3070,359M3036,419 3042,391 3053,364M3070,359 3053,364M3141,347 3113,336 3089,318M3070,359 3089,318M3053,364 3050,362M3089,318 3082,295M3082,295 3049,304M3196,328 3202,318M3018,964 2975,958M3018,964 3041,925M2975,958 2975,929 2979,900M3041,925 2997,895M2997,895 2979,900M2913,952 2961,968M2913,952 2915,943M2918,932 2925,903M2925,903 2953,886M2953,886 2979,900M2961,968 2975,958M3024,851 2997,895M2948,844 2953,886M2892,705 2904,693M2976,711 2961,686M2961,686 2933,690 2904,693M2868,624 2841,641M2868,624 2908,628M2904,693 2903,660 2908,628M2923,562 2951,551M2923,562 2913,594 2908,628M2951,551 2981,597M2908,628 2936,634 2964,639M2981,597 2964,639M2961,686 2969,650M2964,639 2969,650M3022,705 3025,656M2969,650 3025,656M2788,747 2811,706M2788,747 2808,777M2842,777 2835,781M2808,777 2835,781M2821,397 2774,375M2821,397 2828,428 2828,443M2702,483 2727,495M2775,487 2792,475M2923,562 2890,552 2870,546M2821,397 2843,379 2867,366M2925,377 2931,384M2868,624 2859,584 2857,557M2694,682 2696,630M2694,682 2727,680 2759,672M2696,630 2744,629M2759,672 2744,629M2691,686 2657,683M2691,686 2694,682M2657,683 2636,632M2691,626 2696,630M3196,1049 3194,1058M3202,1066 3194,1058M2744,1352 2760,1352M2760,1352 2786,1374M2923,1255 2929,1249M2352,1120 2350,1149 2348,1177 2341,1205M2226,1173 2246,1194 2264,1216M2341,1205 2302,1212 2264,1216M2168,1296 2205,1284 2244,1278M2264,1216 2254,1247 2244,1278M2509,1085 2521,1117M2341,1205 2349,1213M2318,1530 2331,1501M2318,1530 2293,1513 2273,1491M2273,1491 2317,1487M2331,1501 2317,1487M2244,1278 2261,1302 2282,1324 2296,1343M2616,1679 2608,1650 2597,1622 2589,1593 2584,1564M2639,1557 2604,1542M2584,1564 2604,1542M2318,1531 2366,1554M2318,1531 2297,1558 2268,1578 2248,1606M2331,1624 2350,1596 2366,1566M2366,1566 2366,1554M2581,1700 2548,1689 2514,1679M2584,1564 2544,1555M2544,1555 2538,1586 2529,1617 2520,1647 2514,1679M2407,1715 2440,1697 2471,1676M2440,1601 2404,1583 2366,1566M2440,1601 2461,1627M2461,1627 2471,1676M2471,1676 2514,1679M2544,1555 2539,1548M2461,1627 2472,1587 2490,1550M2490,1550 2539,1548M2581,1394 2599,1393M2581,1394 2580,1390M2599,1393 2601,1387M2626,1400 2613,1406M2626,1400 2632,1376M2613,1406 2599,1393M2707,1557 2713,1549M2655,1480 2662,1465M2655,1480 2661,1489M2662,1465 2678,1471M2666,1525 2631,1507M2631,1507 2634,1486M2634,1486 2655,1480M2617,793 2625,765 2636,738M2617,793 2581,772 2548,746M2548,746 2586,731 2623,716M2636,738 2623,716M2617,795 2593,830M2540,745 2548,746M2540,745 2505,762M2495,780 2505,762M2556,682 2596,674M2556,682 2540,656M2540,656 2568,613M2596,674 2608,638M2608,638 2568,613M2540,745 2546,713 2556,682M2624,711 2596,674M2624,711 2623,716M2634,631 2608,638M2657,683 2624,711M2505,762 2494,737M2494,737 2499,698 2499,665M2540,656 2516,654M2575,590 2567,609M2567,609 2548,602M2568,613 2567,609M2504,616 2505,624 2505,626M2734,769 2689,780M2734,769 2748,738M2746,735 2748,738M2746,735 2698,716M2698,716 2676,747M2676,747 2689,780M2685,791 2689,780M2685,791 2716,832M2716,832 2762,816M2762,816 2734,769M2788,747 2748,738M2762,816 2766,817M2766,817 2785,795 2808,777M2795,674 2762,674M2762,674 2753,704 2746,735M2762,674 2759,672M2691,686 2698,716M2636,738 2676,747M2653,807 2617,795M2653,807 2685,791M2248,1606 2237,1598M2120,1718 2126,1682 2127,1646 2129,1609M2237,1598 2201,1603 2166,1608 2129,1609M2111,1473 2121,1487M2014,1577 2020,1576 2053,1574 2085,1568M2121,1487 2113,1516 2094,1539 2085,1568M2085,1568 2106,1590 2129,1609M3124,806 3138,767M3079,752 3110,732M3110,732 3138,767M3195,793 3173,757M3138,767 3173,757M3175,555 3170,584M3175,555 3128,530M3170,584 3131,594M3128,530 3108,549M3131,594 3108,549M3203,724 3193,722M3173,757 3186,726M3193,722 3186,726M3086,684 3116,705M3086,684 3081,665M3081,665 3102,627M3116,705 3127,701M3127,701 3139,676 3156,652M3156,652 3118,624M3118,624 3102,627M3039,718 3061,699 3086,684M3110,732 3116,705M3025,656 3032,650M3032,650 3081,665M3186,726 3156,716 3127,701M3170,584 3188,605M3131,594 3118,624M3156,652 3181,649M3188,605 3181,649M3193,722 3197,690 3193,659M3181,649 3193,659M3175,555 3202,537M3203,600 3188,605M3193,659 3203,658M2872,317 2868,312 2847,284 2827,254M2935,233 2921,215 2895,188M2831,248 2842,229 2851,202M2851,202 2895,188M2788,268 2792,266 2827,254M2797,146 2804,152 2826,178 2851,202M3125,971 3123,1000M3184,1020 3142,1022M3123,1000 3142,1022M2573,1000 2590,1014M2573,1000 2588,973 2602,945M2590,1014 2643,1007M2643,1007 2645,976M2602,945 2645,976M2509,1001 2541,1003 2573,1000M2474,930 2506,929 2537,929 2568,932 2600,930M2602,945 2600,930M2578,873 2588,900 2602,925M2600,930 2602,925M2736,574 2758,600M2736,574 2739,548M2800,557 2812,566M2758,600 2796,595M2796,595 2812,566M2692,588 2736,574M2744,629 2758,600M2828,557 2812,566M2824,641 2796,595M3194,1058 3167,1078M3142,1022 3132,1056M3167,1078 3132,1056M3091,1020 3095,1056M3091,1020 3123,1000M3095,1056 3112,1064M3112,1064 3132,1056M3167,1078 3164,1104M3202,1122 3164,1104M2760,1352 2771,1341M2871,1304 2863,1304M2863,1304 2858,1310M2832,1336 2830,1338M2885,1285 2876,1300M2875,1244 2855,1245 2830,1248M2859,1299 2863,1304M2826,1336 2830,1338M2792,1378 2819,1365M2886,1235 2886,1216M2834,1208 2825,1245M2834,1208 2860,1196M3010,1208 2993,1193M3010,1208 3008,1255M3008,1255 2988,1262M2993,1193 2967,1210M2789,999 2762,977M2789,999 2813,994M2813,994 2817,989M2817,989 2821,948M2762,977 2769,926M2821,948 2794,924M2794,924 2769,926M2716,993 2762,977M2716,993 2701,959M2701,959 2722,934 2744,911M2744,911 2769,926M2717,1154 2745,1133M2717,1154 2725,1171M2745,1133 2769,1153 2790,1177M2753,1196 2777,1195M2790,1177 2777,1195M2805,1173 2790,1177M2805,1173 2810,1164M2771,1106 2749,1122M2749,1122 2745,1133M2778,1202 2777,1195M2834,1208 2805,1173M2717,1154 2710,1154M2316,1430 2322,1437M2218,1456 2216,1467M2308,1460 2322,1437M2308,1460 2272,1466 2236,1475M2216,1467 2219,1472M2236,1475 2219,1472M2148,1342 2175,1366 2196,1391M2121,1487 2153,1483 2185,1475 2216,1467M2334,1440 2322,1437M2334,1440 2338,1467M2338,1467 2321,1471M2321,1471 2308,1460M2273,1491 2236,1475M2317,1487 2321,1471M2237,1598 2229,1567 2231,1534 2226,1503 2219,1472M2631,1507 2613,1514M2604,1542 2603,1526M2613,1514 2603,1526M2625,1472 2634,1486M2625,1472 2608,1472M2608,1472 2600,1481M2613,1514 2600,1481M2625,1472 2631,1461M2608,1472 2602,1458M2621,1437 2631,1461M2621,1437 2614,1434M2602,1458 2614,1434M2598,1242 2603,1234M2603,1234 2637,1262M2601,1225 2598,1223M2601,1225 2603,1234M2601,1225 2610,1218M2614,1215 2626,1207 2627,1206M2644,1430 2653,1454M2644,1430 2652,1416M2652,1416 2678,1438M2677,1440 2659,1457M2659,1457 2653,1454M2621,1437 2644,1430M2631,1461 2653,1454M2626,1400 2652,1416M2613,1406 2606,1424M2614,1434 2606,1424M2668,1400 2652,1416M2685,1449 2677,1440M2662,1465 2659,1457M2488,658 2471,655M2494,737 2472,712 2450,696M2378,754 2382,748 2387,739M3065,526 3090,551M3065,526 3022,535M3090,551 3062,594M3022,535 3028,565 3033,596M3062,594 3037,598M3033,596 3037,598M3132,508 3115,481M3132,508 3128,530M3071,486 3065,526M3108,549 3090,551M2998,519 3022,535M3102,627 3062,594M2981,597 3033,596M3032,650 3037,598M3202,512 3180,492M3180,492 3180,460M3180,460 3202,445M3132,508 3180,492M3148,443 3180,460M3189,396 3202,431M3142,278 3134,274M3142,278 3170,268 3196,255M3134,274 3133,270M3196,255 3176,234 3174,231M3161,328 3142,278M3082,295 3084,288M3084,288 3134,274M3202,256 3196,255M3084,288 3074,270M2714,1004 2723,1015M2714,1004 2667,1033M2729,1061 2710,1078M2667,1033 2667,1041M2667,1041 2688,1077M2710,1078 2688,1077M2778,1021 2789,999M2716,993 2714,1004M2643,1007 2667,1033M2645,976 2678,951M2678,951 2701,959M2749,1122 2731,1099 2710,1078M2710,1154 2691,1133 2671,1114M2671,1114 2688,1077M2642,911 2664,917M2634,903 2636,866M2664,917 2685,898 2703,877M2659,851 2636,866M2659,851 2700,869M2700,869 2703,877M2678,951 2664,917M2602,925 2631,910M2595,847 2636,866M2740,901 2744,911M2740,901 2703,877M2653,807 2659,851M2716,832 2700,869M2766,817 2780,845M2780,845 2761,874 2740,901M2816,888 2805,855M2816,888 2862,893M2805,855 2839,834M2839,834 2878,854M2878,854 2877,877M2877,877 2862,893M2780,845 2805,855M2794,924 2816,888M2863,937 2821,948M2863,937 2862,893M2835,781 2839,834M2887,846 2878,854M2925,903 2877,877M2913,952 2895,961M2863,937 2895,961M3202,1171 3173,1178M3164,1104 3141,1123M3141,1123 3154,1152 3173,1178M3116,1221 3131,1198M3174,1214 3163,1190M3131,1198 3163,1190M3163,1190 3173,1178M2961,968 2963,1016M3018,964 3031,989M2963,1016 2995,1023M2995,1023 3031,989M3095,952 3075,976 3053,998M3031,989 3053,998M3091,1020 3056,1004M3053,998 3056,1004M2813,994 2829,1037M2820,1049 2829,1037M3017,1625 3009,1577M3009,1577 3004,1565M3074,1227 3107,1226M3074,1227 3071,1233M3070,1236 3054,1265M3054,1265 3079,1284 3085,1287M3074,1227 3057,1200M3057,1200 3010,1208M3008,1255 3043,1270M3054,1265 3043,1270M3033,1337 3038,1362M3040,1370 3041,1375M3032,1322 3035,1297 3043,1270M2922,1116 2901,1120M2922,1116 2944,1134M2944,1134 2946,1151M2993,1193 2991,1168M2991,1168 2965,1159M2955,1155 2947,1152M2957,1071 2924,1082M2957,1071 2986,1092M2924,1082 2922,1116M2986,1092 2965,1114 2944,1134M2851,1085 2869,1083M2869,1083 2875,1102M3102,1311 3088,1333M2617,1143 2624,1142M2557,1088 2595,1067M2624,1142 2627,1137M2635,1159 2624,1142M2509,1084 2557,1088M2590,1014 2596,1067M2667,1041 2641,1058 2635,1061M2603,1526 2575,1511M2600,1481 2587,1482M2587,1482 2575,1511M2544,1526 2539,1548M2544,1526 2557,1512M2557,1512 2575,1511M2341,1496 2348,1474M2341,1496 2366,1511M2366,1511 2376,1484M2376,1484 2359,1471M2359,1471 2348,1474M2331,1501 2341,1496M2338,1467 2348,1474M2366,1554 2377,1538M2377,1538 2366,1511M2334,1440 2352,1432M2367,1451 2352,1432M2367,1451 2359,1471M2440,1601 2431,1571 2428,1540M2377,1538 2382,1536M2428,1540 2382,1536M2895,188 2912,166M2995,1023 3014,1057M3056,1004 3043,1049M3014,1057 3043,1049M2963,1016 2954,1024M2954,1024 2957,1071M2986,1092 2999,1092M3014,1057 2999,1092M3095,1056 3067,1066M3067,1066 3043,1049M2900,1064 2914,1025M2900,1064 2876,1072M2876,1072 2857,1037M2857,1037 2881,997M2914,1025 2886,995M2886,995 2881,997M2954,1024 2914,1025M2924,1082 2900,1064M2869,1083 2876,1072M2829,1037 2857,1037M2817,989 2850,989 2881,997M2895,961 2886,995M3009,1577 3025,1555M3041,1375 3070,1388M3067,1400 3070,1388M2602,1458 2577,1450M2606,1424 2593,1425M2593,1425 2577,1450M2581,1394 2571,1410M2593,1425 2571,1410M2571,1410 2568,1411M2568,1411 2555,1405M2545,1384 2555,1405M2484,1473 2501,1456M2484,1473 2493,1490M2493,1490 2519,1477M2501,1456 2519,1477M2522,1508 2487,1510M2522,1508 2524,1478M2487,1510 2493,1490M2524,1478 2519,1477M2352,1432 2363,1404M2367,1451 2380,1450M2376,1484 2395,1480M2395,1480 2396,1470M2380,1450 2396,1470M2382,1536 2401,1504M2395,1481 2401,1504M3165,185 3154,161M3154,161 3164,146M2991,1168 3003,1156M2999,1092 3001,1095M3003,1156 2999,1126 3001,1095M3120,1624 3134,1593 3137,1588M2568,1411 2560,1434M2577,1450 2560,1434M2442,1391 2446,1391M2428,1540 2440,1527M2401,1504 2434,1505M2434,1505 2440,1527M2490,1550 2480,1530M2440,1527 2480,1530M2544,1526 2522,1508M2486,1511 2480,1530M3154,161 3122,159M3122,159 3112,146M3122,159 3100,192M3049,168 3048,162M3048,162 3033,152M2989,188 2988,186 2983,179M3091,192 3078,188M3065,146 3048,162M3062,1173 3045,1155M3062,1173 3099,1158M3045,1155 3051,1110M3099,1158 3112,1123M3061,1105 3051,1110M3061,1105 3112,1122M3057,1200 3062,1173M3003,1156 3045,1155M3131,1198 3099,1158M3001,1095 3051,1110M3141,1123 3112,1123M3067,1066 3061,1105M3112,1064 3109,1093 3112,1122M3109,1453 3118,1443M3172,1464 3170,1460 3166,1452M3070,1388 3079,1384M3088,1333 3089,1336M2557,1512 2554,1496M2524,1478 2529,1475M2529,1475 2554,1496M2587,1482 2570,1468M2554,1496 2570,1468M2577,1450 2569,1465M2570,1468 2569,1465M2546,1437 2541,1460M2546,1437 2533,1423M2533,1423 2525,1422M2536,1462 2541,1460M2536,1462 2512,1438M2525,1422 2517,1426M2512,1438 2517,1426M2560,1434 2546,1437M2569,1465 2541,1460M2555,1405 2533,1423M2529,1475 2536,1462M2501,1446 2501,1456M2501,1446 2512,1438M2511,1393 2526,1391M2531,1386 2526,1391M2504,1415 2502,1398M2504,1415 2517,1426M2525,1422 2526,1391M2458,1390 2475,1407M2475,1407 2486,1394M2485,1441 2474,1446M2485,1441 2483,1418M2474,1446 2456,1430M2483,1418 2475,1411M2475,1411 2457,1423M2456,1430 2457,1423M2501,1446 2485,1441M2504,1415 2483,1418M2475,1407 2475,1411M2446,1391 2444,1409M2444,1409 2457,1423M2395,1481 2423,1483M2423,1483 2434,1503M2396,1470 2415,1453M2415,1453 2429,1469M2423,1483 2429,1469M2415,1452 2430,1437M2415,1452 2393,1434M2430,1437 2422,1418M2393,1416 2417,1415M2393,1416 2393,1434M2417,1415 2422,1418M2380,1450 2393,1434M2444,1409 2422,1418M2441,1440 2430,1437M2441,1440 2456,1430M2377,1402 2393,1416M2422,1395 2417,1415M2448,1458 2442,1467M2448,1458 2469,1460M2442,1467 2452,1488M2473,1468 2469,1460M2473,1468 2457,1487M2457,1487 2452,1488M2441,1440 2448,1458M2429,1469 2442,1467M2474,1446 2469,1460M2434,1503 2452,1488M2484,1473 2473,1468M2486,1511 2457,1487" fill="none" stroke="#c5c5c5" stroke-width="2.1" stroke-linejoin="round"/>
<g fill="#fff" fill-opacity=".85"><circle cx="3045" cy="397" r="9.6"/><circle cx="3140" cy="376" r="9.6"/><circle cx="3192" cy="374" r="9.6"/><circle cx="3132" cy="425" r="9.6"/><circle cx="3025" cy="532" r="9.6"/><circle cx="2652" cy="732" r="9.6"/><circle cx="2512" cy="846" r="9.6"/><circle cx="2484" cy="922" r="9.6"/><circle cx="2479" cy="1009" r="9.6"/><circle cx="2564" cy="997" r="9.6"/><circle cx="2579" cy="1017" r="9.6"/><circle cx="2641" cy="1000" r="9.6"/><circle cx="2693" cy="965" r="9.6"/><circle cx="2721" cy="997" r="9.6"/><circle cx="2753" cy="978" r="9.6"/><circle cx="2527" cy="1074" r="9.6"/><circle cx="2641" cy="1067" r="9.6"/><circle cx="2691" cy="1057" r="9.6"/><circle cx="2692" cy="1103" r="9.6"/><circle cx="2733" cy="1123" r="9.6"/><circle cx="2760" cy="1108" r="9.6"/><circle cx="2621" cy="1160" r="9.6"/><circle cx="2779" cy="1155" r="9.6"/><circle cx="2735" cy="1173" r="9.6"/><circle cx="2805" cy="1181" r="9.6"/><circle cx="2879" cy="1218" r="9.6"/><circle cx="2815" cy="1225" r="9.6"/><circle cx="2856" cy="1233" r="9.6"/><circle cx="2058" cy="1132" r="9.6"/><circle cx="2126" cy="1111" r="9.6"/><circle cx="2179" cy="1117" r="9.6"/><circle cx="2235" cy="1125" r="9.6"/><circle cx="2260" cy="1141" r="9.6"/><circle cx="2238" cy="1157" r="9.6"/><circle cx="2182" cy="1182" r="9.6"/><circle cx="2293" cy="1195" r="9.6"/><circle cx="2373" cy="1182" r="9.6"/><circle cx="2194" cy="1234" r="9.6"/><circle cx="2214" cy="1270" r="9.6"/><circle cx="2121" cy="1290" r="9.6"/><circle cx="2293" cy="1285" r="9.6"/><circle cx="2265" cy="1338" r="9.6"/><circle cx="2169" cy="1368" r="9.6"/><circle cx="2390" cy="1091" r="9.6"/><circle cx="2287" cy="708" r="9.6"/><circle cx="2316" cy="706" r="9.6"/><circle cx="2222" cy="730" r="9.6"/><circle cx="2414" cy="786" r="9.6"/><circle cx="2320" cy="830" r="9.6"/><circle cx="2399" cy="844" r="9.6"/><circle cx="2231" cy="877" r="9.6"/><circle cx="2283" cy="914" r="9.6"/><circle cx="2378" cy="903" r="9.6"/><circle cx="2335" cy="1030" r="9.6"/><circle cx="2164" cy="392" r="9.6"/><circle cx="2233" cy="380" r="9.6"/><circle cx="2184" cy="450" r="9.6"/><circle cx="2185" cy="490" r="9.6"/><circle cx="2251" cy="505" r="9.6"/><circle cx="2091" cy="532" r="9.6"/><circle cx="2232" cy="565" r="9.6"/><circle cx="2282" cy="574" r="9.6"/><circle cx="2297" cy="636" r="9.6"/><circle cx="2247" cy="651" r="9.6"/><circle cx="2207" cy="659" r="9.6"/><circle cx="2337" cy="667" r="9.6"/><circle cx="2622" cy="1253" r="9.6"/><circle cx="2789" cy="1364" r="9.6"/><circle cx="2872" cy="1298" r="9.6"/></g>
<g fill="#bcbcbc"><circle cx="3045" cy="397" r="6.6"/><circle cx="3140" cy="376" r="6.6"/><circle cx="3192" cy="374" r="6.6"/><circle cx="3132" cy="425" r="6.6"/><circle cx="3025" cy="532" r="6.6"/><circle cx="2652" cy="732" r="6.6"/><circle cx="2512" cy="846" r="6.6"/><circle cx="2484" cy="922" r="6.6"/><circle cx="2479" cy="1009" r="6.6"/><circle cx="2564" cy="997" r="6.6"/><circle cx="2579" cy="1017" r="6.6"/><circle cx="2641" cy="1000" r="6.6"/><circle cx="2693" cy="965" r="6.6"/><circle cx="2721" cy="997" r="6.6"/><circle cx="2753" cy="978" r="6.6"/><circle cx="2527" cy="1074" r="6.6"/><circle cx="2641" cy="1067" r="6.6"/><circle cx="2691" cy="1057" r="6.6"/><circle cx="2692" cy="1103" r="6.6"/><circle cx="2733" cy="1123" r="6.6"/><circle cx="2760" cy="1108" r="6.6"/><circle cx="2621" cy="1160" r="6.6"/><circle cx="2779" cy="1155" r="6.6"/><circle cx="2735" cy="1173" r="6.6"/><circle cx="2805" cy="1181" r="6.6"/><circle cx="2879" cy="1218" r="6.6"/><circle cx="2815" cy="1225" r="6.6"/><circle cx="2856" cy="1233" r="6.6"/><circle cx="2058" cy="1132" r="6.6"/><circle cx="2126" cy="1111" r="6.6"/><circle cx="2179" cy="1117" r="6.6"/><circle cx="2235" cy="1125" r="6.6"/><circle cx="2260" cy="1141" r="6.6"/><circle cx="2238" cy="1157" r="6.6"/><circle cx="2182" cy="1182" r="6.6"/><circle cx="2293" cy="1195" r="6.6"/><circle cx="2373" cy="1182" r="6.6"/><circle cx="2194" cy="1234" r="6.6"/><circle cx="2214" cy="1270" r="6.6"/><circle cx="2121" cy="1290" r="6.6"/><circle cx="2293" cy="1285" r="6.6"/><circle cx="2265" cy="1338" r="6.6"/><circle cx="2169" cy="1368" r="6.6"/><circle cx="2390" cy="1091" r="6.6"/><circle cx="2287" cy="708" r="6.6"/><circle cx="2316" cy="706" r="6.6"/><circle cx="2222" cy="730" r="6.6"/><circle cx="2414" cy="786" r="6.6"/><circle cx="2320" cy="830" r="6.6"/><circle cx="2399" cy="844" r="6.6"/><circle cx="2231" cy="877" r="6.6"/><circle cx="2283" cy="914" r="6.6"/><circle cx="2378" cy="903" r="6.6"/><circle cx="2335" cy="1030" r="6.6"/><circle cx="2164" cy="392" r="6.6"/><circle cx="2233" cy="380" r="6.6"/><circle cx="2184" cy="450" r="6.6"/><circle cx="2185" cy="490" r="6.6"/><circle cx="2251" cy="505" r="6.6"/><circle cx="2091" cy="532" r="6.6"/><circle cx="2232" cy="565" r="6.6"/><circle cx="2282" cy="574" r="6.6"/><circle cx="2297" cy="636" r="6.6"/><circle cx="2247" cy="651" r="6.6"/><circle cx="2207" cy="659" r="6.6"/><circle cx="2337" cy="667" r="6.6"/><circle cx="2622" cy="1253" r="6.6"/><circle cx="2789" cy="1364" r="6.6"/><circle cx="2872" cy="1298" r="6.6"/></g>
<!--/MAPCONTENT-->
</svg>
</div>

<!-- map widgets -->
<div class="abs" style="left:3056px;top:195px;width:96px;height:165px;background:#fafafa;border-radius:12px"></div>
<div class="abs" style="left:3056px;top:291px;width:96px;height:2.5px;background:#e2e2e2"></div>
<svg width="60" height="60" style="left:3074px;top:213px" viewBox="0 0 60 60"><circle class="ico" cx="30" cy="30" r="22.5"/><path class="ico" d="M30 7v22"/></svg>
<div class="t" style="left:3056px;width:96px;text-align:center;top:309px;font-size:34px;color:#111">3.0</div>
<div class="abs" style="left:2388px;top:1699px;width:781px;height:71px;background:#fff;border-radius:36px"></div>
<div class="t" style="left:2412px;top:1716px;font-size:36px;color:#333">© MapTiler © OpenStreetMap contributors</div>
<div class="abs" style="left:3099px;top:1699px;width:71px;height:71px;background:#efefef;border-radius:50%"></div>
<svg width="48" height="48" style="left:3110px;top:1710px" viewBox="0 0 48 48"><circle cx="24" cy="24" r="21.5" fill="#000"/><circle cx="24" cy="13.5" r="3.6" fill="#fff"/><rect x="20.8" y="20" width="6.4" height="17" rx="2.5" fill="#fff"/></svg>
<!-- HEADER -->
<div id="header" class="abs"></div>
<div class="t" style="left:195px;top:50px;font-size:45px;color:#222"><span style="color:#b9b9b9">My maps</span> / Bright</div>
<div class="box" style="left:2041px;top:36px;width:174px;height:72px;background:#ececec"></div>
<div class="t" style="left:2041px;width:174px;text-align:center;top:54px;font-size:35px;color:#1a1a1a">Save</div>
<div class="t" style="left:2255px;width:178px;text-align:center;top:54px;font-size:35px;color:#bdbdbd">Publish</div>
<div class="abs" style="left:2523px;top:24px;width:3px;height:96px;background:#dedede"></div>
<div class="abs" style="left:3006px;top:24px;width:3px;height:96px;background:#dedede"></div>
<svg width="60" height="60" style="left:2592px;top:42px" viewBox="0 0 60 60"><path class="ico" d="M54 30H8M27 11L8 30l19 19"/></svg>
<svg width="60" height="60" style="left:2735px;top:42px" viewBox="0 0 60 60"><path class="ico" style="stroke:#c4c4c4" d="M6 30h46M33 11l19 19-19 19"/></svg>
<svg width="60" height="60" style="left:2879px;top:42px" viewBox="0 0 60 60"><path class="ico" d="M6 18h48M6 30h48M6 42h48"/></svg>
<svg width="60" height="60" style="left:3074px;top:42px" viewBox="0 0 60 60"><path class="ico" d="M11 11l38 38M49 11L11 49"/></svg>
<!-- SIDEBAR -->
<div id="side" class="abs"></div>
<div class="abs" style="left:0;top:143px;width:146px;height:3px;background:#dedede"></div>
<!-- logo -->
<svg width="146" height="146" style="left:0;top:0" viewBox="0 0 146 146">
<defs><clipPath id="lg"><path d="M-10.100000000000001,-23.1H10.100000000000001A13 13 0 0 1 23.1,-10.100000000000001V23.1H-10.100000000000001A13 13 0 0 1 -23.1,10.100000000000001V-10.100000000000001A13 13 0 0 1 -10.100000000000001,-23.1Z"/></clipPath></defs>
<g transform="translate(72.7 69.8) rotate(45)"><g clip-path="url(#lg)">
<rect x="-23.40" y="-23.40" width="16.00" height="16.00" fill="#fbc935"/><rect x="-8.00" y="-23.40" width="16.00" height="16.00" fill="#ffa923"/><rect x="7.40" y="-23.40" width="16.00" height="16.00" fill="#03cfde"/>
<rect x="-23.40" y="-8.00" width="16.00" height="16.00" fill="#fb3a1b"/><rect x="7.40" y="-8.00" width="16.00" height="16.00" fill="#07a0c3"/>
<rect x="-23.40" y="7.40" width="16.00" height="16.00" fill="#f1175d"/><rect x="-8.00" y="7.40" width="16.00" height="16.00" fill="#761fe8"/><rect x="7.40" y="7.40" width="16.00" height="16.00" fill="#3b1789"/>
</g></g>
</svg>
<!-- lightning -->
<svg width="60" height="60" style="left:42px;top:189px" viewBox="0 0 60 60"><path class="gico" d="M34.5 8L16.5 34H29.5L25.5 51L44 26H31z" stroke-linejoin="miter"/></svg>
<div class="box" style="left:24px;top:315px;width:96px;height:96px;background:#fafafa;border-radius:12px"></div>
<svg width="60" height="60" style="left:42px;top:333px" viewBox="0 0 60 60"><path class="ico" d="M30 8L8.5 23.8L30 39.5L51.5 23.8zM8 35.5L30 51.3L52 35.5"/></svg>
<svg width="60" height="60" style="left:42px;top:477px" viewBox="0 0 60 60"><path class="gico" d="M6 19h28M46 19h8M6 41h8M26 41h28"/><circle class="gico" cx="40" cy="19" r="6"/><circle class="gico" cx="20" cy="41" r="6"/></svg>
<div class="abs" style="left:24px;top:614px;width:96px;height:3px;background:#dedede"></div>
<svg width="57" height="57" style="left:44px;top:698px" viewBox="0 0 60 60"><path class="gico" d="M7 14h13v-3a6 6 0 1 1 12 0v3h13v13h3a6 6 0 1 1 0 12h-3v14H32v-3a6 6 0 1 0-12 0v3H7V39h3a6 6 0 1 0 0-12H7z" stroke-linejoin="miter"/></svg>
<svg width="60" height="60" style="left:42px;top:1698px" viewBox="0 0 60 60"><circle class="gico" cx="30" cy="30" r="22.5"/><text x="30" y="41.5" text-anchor="middle" font-family="Liberation Sans,sans-serif" font-size="32" fill="#777">?</text></svg>
<!-- LAYERS -->
<div id="layers" class="abs"></div>
<div class="t" style="left:195px;top:209px;font-size:42.5px;color:#6a6a6a">Layers</div>
<svg width="40" height="40" style="left:808px;top:211px" viewBox="0 0 40 40"><path class="ico" d="M5 5l30 30M35 5L5 35"/></svg>
<div class="box" style="left:195px;top:315px;width:96px;height:96px"></div>
<svg width="40" height="40" style="left:223px;top:343px" viewBox="0 0 40 40"><path class="ico" d="M20 2v36M2 20h36"/></svg>
<div class="box" style="left:315px;top:315px;width:549px;height:96px"></div>
<div class="t" style="left:342px;top:346px;font-size:34px;color:#777">Search layers</div>
<div class="abs" id="list" style="left:0;top:459px;width:914px;height:1173px;overflow:hidden">
<div class="abs" style="left:0;top:-459px;width:914px;height:1800px">
<div class="grp" style="top:459px"><svg width="40" height="40" style="left:22px;top:28px" viewBox="0 0 40 40"><path class="ico" d="M20 37C12.5 29.5 7 24 7 18a13 13 0 0 1 26 0c0 6-5.5 11.5-13 19z"/><circle cx="20" cy="18" r="4.2" fill="#222"/></svg><div class="t">POI</div></div>
<div class="grp" style="top:567px"><svg width="40" height="40" style="left:22px;top:28px" viewBox="0 0 40 40"><path class="ico" d="M4 2v36M4 6h16v17H4M20 12l16-2-3 17-13 0"/></svg><div class="t">Administrative</div></div>
<div class="grp" style="top:675px"><svg width="40" height="40" style="left:22px;top:28px" viewBox="0 0 40 40"><path class="ico" d="M4 37V15h8M12 37V4h14v33M26 22h11v15M2 37h37M12 11h14M12 18h14M12 25h14M12 31h14M31 37v-8"/></svg><div class="t">Built-up</div></div>
<div class="grp" style="top:783px"><svg width="40" height="40" style="left:22px;top:28px" viewBox="0 0 40 40"><path class="ico" d="M4 31V9a5 5 0 0 1 5-5h22a5 5 0 0 1 5 5v22zM4 20h32"/><rect x="6" y="31" width="8" height="7" fill="#222"/><rect x="26" y="31" width="8" height="7" fill="#222"/><circle cx="12" cy="26" r="2.6" fill="#222"/><circle cx="28" cy="26" r="2.6" fill="#222"/></svg><div class="t">Transport</div></div>
<div class="grp" style="top:891px;height:900px"></div>
<div class="grp" style="top:891px"><svg width="40" height="40" style="left:22px;top:28px" viewBox="0 0 40 40"><path class="ico" d="M3 10c4-5 8-5 12 0s8 4 11 0 7-3 11 0M3 22c4-5 8-5 12 0s8 4 11 0 7-3 11 0M3 34c4-5 8-5 12 0s8 4 11 0 7-3 11 0"/></svg><div class="t">Water</div></div>
<div class="row" style="top:987px;"><div class="sw"><i style="background:#215e8c"></i></div><svg width="34" height="34" style="left:93px;top:31px" viewBox="0 0 34 34"><text x="14.2" y="31.5" font-family="Liberation Serif,serif" font-size="45" text-anchor="middle" fill="#7a7a7a" transform="scale(1.16 1)">T</text></svg><div class="t">Lake labels</div></div>
<div class="row" style="top:1083px;"><div class="sw"><i style="background:#215e8c"></i></div><svg width="34" height="34" style="left:93px;top:31px" viewBox="0 0 34 34"><text x="14.2" y="31.5" font-family="Liberation Serif,serif" font-size="45" text-anchor="middle" fill="#7a7a7a" transform="scale(1.16 1)">T</text></svg><div class="t">Sea labels</div></div>
<div class="row" style="top:1179px;"><div class="sw"><i style="background:#215e8c"></i></div><svg width="34" height="34" style="left:93px;top:31px" viewBox="0 0 34 34"><text x="14.2" y="31.5" font-family="Liberation Serif,serif" font-size="45" text-anchor="middle" fill="#7a7a7a" transform="scale(1.16 1)">T</text></svg><div class="t">Ocean labels</div></div>
<div class="row" style="top:1275px;"><div class="sw"><i style="background:#74ade9"></i></div><svg width="34" height="34" style="left:93px;top:31px" viewBox="0 0 34 34"><text x="14.2" y="31.5" font-family="Liberation Serif,serif" font-size="45" text-anchor="middle" fill="#7a7a7a" transform="scale(1.16 1)">T</text></svg><div class="t">Lakeline labels</div></div>
<div class="row" style="top:1371px;"><div class="sw"><i style="background:#4673a3"></i></div><svg width="34" height="34" style="left:93px;top:31px" viewBox="0 0 34 34"><text x="14.2" y="31.5" font-family="Liberation Serif,serif" font-size="45" text-anchor="middle" fill="#7a7a7a" transform="scale(1.16 1)">T</text></svg><div class="t">River labels</div></div>
<div class="row" style="top:1467px;background:#dedede;"><div class="sw" style="background:#c0d9f2;border-color:#c0d9f2"></div><svg width="34" height="34" style="left:93px;top:31px" viewBox="0 0 34 34"><path d="M3 12L31 2v28H13z" fill="none" stroke="#777" stroke-width="3.2"/></svg><div class="t">Water</div></div>
<div class="row" style="top:1563px;"><div class="sw" style="background:#cfe0f3;border-color:#dcdcdc"></div><svg width="34" height="34" style="left:93px;top:31px" viewBox="0 0 34 34"><path d="M3 12L31 2v28H13z" fill="none" stroke="#777" stroke-width="3.2"/></svg><div class="t">Water intermittent</div></div>
</div></div>
<div class="abs" style="left:879px;top:459px;width:33px;height:1173px;background:#f0f0f0"></div>
<div class="abs" style="left:882px;top:492px;width:28px;height:741px;background:#c1c1c1"></div>
<svg width="33" height="33" style="left:879px;top:459px" viewBox="0 0 33 33"><path d="M9.5 20.5L16.5 13.5L23.5 20.5z" fill="#a3a3a3"/></svg>
<svg width="33" height="33" style="left:879px;top:1599px" viewBox="0 0 33 33"><path d="M9.5 12.5L16.5 19.5L23.5 12.5z" fill="#505050"/></svg>
<div class="box" style="left:195px;top:1680px;width:669px;height:72px"></div>
<div class="box" style="left:195px;top:1680px;width:334px;height:72px;background:#dedede;border-radius:12px 0 0 12px"></div>
<div class="t" style="left:195px;width:334px;text-align:center;top:1698px;font-size:35px">Blocks</div>
<div class="t" style="left:529px;width:335px;text-align:center;top:1698px;font-size:35px;letter-spacing:.3px">Verticality</div>
<!-- PROPS -->
<div id="props" class="abs"></div>
<svg width="34" height="34" style="left:963px;top:215px" viewBox="0 0 34 34"><path d="M3 12L31 2v28H13z" fill="none" stroke="#777" stroke-width="3.2"/></svg>
<div class="t" style="left:1047px;top:209px;font-size:42.5px;color:#777">Water</div>
<svg width="40" height="40" style="left:1576px;top:211px" viewBox="0 0 40 40"><path class="ico" d="M5 5l30 30M35 5L5 35"/></svg>
<div class="abs" style="left:929px;top:291px;width:738px;height:412px;border:5px solid #e81a2b"></div>
<div class="t" style="left:963px;top:319px;font-size:33.5px;font-weight:bold;color:#1d1d1d">Source</div>
<div class="t lbl" style="top:422px">Data source</div>
<div class="box sel" style="top:405px"></div>
<div class="t" style="left:1275px;top:422px">MapTiler Planet</div>
<svg width="28" height="24" style="left:1579px;top:429px" viewBox="0 0 28 24"><path class="ico" d="M4 7l10 10 10-10"/></svg>
<div class="t lbl" style="top:518px">Data layer</div>
<div class="box sel" style="top:501px"></div>
<div class="t" style="left:1275px;top:518px">water</div>
<svg width="28" height="24" style="left:1579px;top:525px" viewBox="0 0 28 24"><path class="ico" d="M4 7l10 10 10-10"/></svg>
<div class="t lbl" style="top:614px">Geometry</div>
<div class="box sel" style="top:597px"></div>
<svg width="34" height="34" style="left:1275px;top:616px" viewBox="0 0 34 34"><path d="M3 12L31 2v28H13z" fill="none" stroke="#222" stroke-width="3"/></svg>
<div class="t" style="left:1347px;top:614px">Polygon</div>
<svg width="28" height="24" style="left:1579px;top:621px" viewBox="0 0 28 24"><path class="ico" d="M4 7l10 10 10-10"/></svg>
<div class="hr" style="top:717px"></div>
<div class="t" style="left:963px;top:786px;font-size:34px;font-weight:bold;color:#1d1d1d">Filter</div>
<svg width="40" height="40" style="left:1433px;top:783px" viewBox="0 0 40 40"><path class="ico" d="M2 33h35V14H10M18 5l-9 9 9 9" /></svg>
<svg width="40" height="40" style="left:1504px;top:783px" viewBox="0 0 40 40"><path class="ico" d="M2 11h18M30 11h8M2 29h6M18 29h20"/><circle class="ico" cx="25" cy="11" r="4.6"/><circle class="ico" cx="13" cy="29" r="4.6"/></svg>
<svg width="40" height="40" style="left:1576px;top:783px" viewBox="0 0 40 40"><path class="ico" d="M2 20h36"/></svg>
<div class="box" style="left:963px;top:888px;width:668px;height:95px;border-radius:24px"></div>
<div class="t" style="left:990px;top:918px;letter-spacing:.6px;color:#1a1a1a">intermittent</div>
<div class="dot" style="left:987px;top:1034px;background:#0eb35d"></div>
<div class="t" style="left:1041px;top:1026px;color:#0eb35d">No</div>
<div class="dot" style="left:987px;top:1106px;background:#fb0d1b"></div>
<div class="t" style="left:1041px;top:1098px;color:#fb0d1b">Yes</div>
<div class="dot" style="left:987px;top:1178px;background:#0eb35d"></div>
<div class="t" style="left:1041px;top:1170px;color:#0eb35d">No value</div>
<div class="hr" style="top:1272px"></div>
<div class="t" style="left:963px;top:1341px;font-size:34px;font-weight:bold;color:#bcbcbc">Filter</div>
<svg width="40" height="40" style="left:1576px;top:1338px" viewBox="0 0 40 40"><path class="ico" d="M20 2v36M2 20h36"/></svg>
<div class="hr" style="top:1443px"></div>
<div class="box" style="left:963px;top:1680px;width:551px;height:72px"></div>
<div class="box" style="left:1238px;top:1680px;width:276px;height:72px;background:#dedede;border-radius:0 12px 12px 0"></div>
<div class="t" style="left:963px;width:275px;text-align:center;top:1698px">Style</div>
<div class="t" style="left:1238px;width:276px;text-align:center;top:1698px">Data</div>
<div class="box" style="left:1560px;top:1680px;width:71px;height:72px"></div>
<div class="t" style="left:1560px;width:71px;text-align:center;top:1698px;font-size:37px;letter-spacing:1px;padding-left:2px;font-family:'Liberation Mono',monospace">{}</div>

</body>
</html>
